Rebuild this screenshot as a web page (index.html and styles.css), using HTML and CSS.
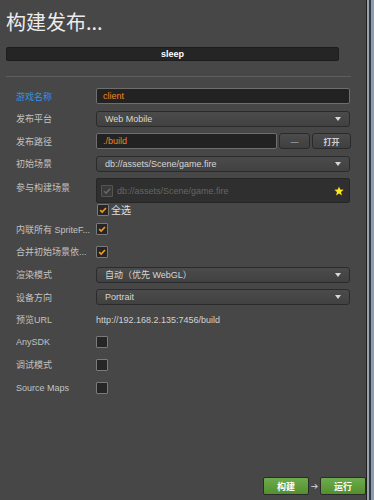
FILE: index.html
```html
<!DOCTYPE html>
<html lang="zh">

<head>
    <meta charset="UTF-8">
    <meta name="viewport" content="width=device-width, initial-scale=1.0">
    <title>构建发布</title>
    <link rel="stylesheet" href="styles.css">
</head>

<body>
    <div class="panel">
        <h1 class="title">构建发布...</h1>

        <div class="project-bar">sleep</div>

        <div class="divider"></div>

        <div class="form">
            <div class="row">
                <label class="label label-active">游戏名称</label>
                <input class="field" type="text" value="client">
            </div>

            <div class="row">
                <label class="label">发布平台</label>
                <div class="select">Web Mobile<span class="caret"></span></div>
            </div>

            <div class="row">
                <label class="label">发布路径</label>
                <input class="field field-path" type="text" value="./build">
                <button class="btn btn-dots">—</button>
                <button class="btn btn-open">打开</button>
            </div>

            <div class="row">
                <label class="label">初始场景</label>
                <div class="select">db://assets/Scene/game.fire<span class="caret"></span></div>
            </div>

            <div class="row row-scenes">
                <label class="label">参与构建场景</label>
                <div class="scenes">
                    <div class="scene-list">
                        <span class="check check-disabled">
                            <svg viewBox="0 0 12 12" width="12" height="12"><path d="M2.5 6.2 L5 8.6 L9.6 3.4" fill="none" stroke="#6a6a6a" stroke-width="1.8"/></svg>
                        </span>
                        <span class="scene-name">db://assets/Scene/game.fire</span>
                        <svg class="star" viewBox="0 0 10 10" width="10" height="10"><path d="M5 0.4 L6.2 3.6 L9.7 3.7 L7 5.9 L7.9 9.4 L5 7.4 L2.1 9.4 L3 5.9 L0.3 3.7 L3.8 3.6 Z" fill="#ffe81a"/></svg>
                    </div>
                    <div class="select-all">
                        <span class="check">
                            <svg viewBox="0 0 12 12" width="12" height="12"><path d="M2.6 6.2 L5 8.5 L9.6 3.6" fill="none" stroke="#f39a1d" stroke-width="2"/></svg>
                        </span>
                        全选
                    </div>
                </div>
            </div>

            <div class="row">
                <label class="label">内联所有 SpriteF...</label>
                <span class="check">
                    <svg viewBox="0 0 12 12" width="12" height="12"><path d="M2.6 6.2 L5 8.5 L9.6 3.6" fill="none" stroke="#f39a1d" stroke-width="2"/></svg>
                </span>
            </div>

            <div class="row">
                <label class="label">合并初始场景依...</label>
                <span class="check">
                    <svg viewBox="0 0 12 12" width="12" height="12"><path d="M2.6 6.2 L5 8.5 L9.6 3.6" fill="none" stroke="#f39a1d" stroke-width="2"/></svg>
                </span>
            </div>

            <div class="row">
                <label class="label">渲染模式</label>
                <div class="select">自动（优先 WebGL）<span class="caret"></span></div>
            </div>

            <div class="row">
                <label class="label">设备方向</label>
                <div class="select">Portrait<span class="caret"></span></div>
            </div>

            <div class="row">
                <label class="label">预览URL</label>
                <span class="url">http://192.168.2.135:7456/build</span>
            </div>

            <div class="row">
                <label class="label">AnySDK</label>
                <span class="check"></span>
            </div>

            <div class="row">
                <label class="label">调试模式</label>
                <span class="check"></span>
            </div>

            <div class="row">
                <label class="label">Source Maps</label>
                <span class="check"></span>
            </div>
        </div>

        <div class="footer">
            <button class="btn-green">构建</button>
            <span class="arrow">➔</span>
            <button class="btn-green">运行</button>
        </div>
    </div>

    <div class="scrollbar"></div>
</body>

</html>
```

FILE: styles.css
```css
body {
    font-family: "Liberation Sans", "Noto Sans CJK SC", sans-serif;
    margin: 0;
    padding: 0;
    background-color: #474747;
    color: #c4c4c4;
    width: 374px;
    height: 500px;
    display: flex;
    overflow: hidden;
}

.panel {
    width: 366px;
    height: 500px;
    display: flex;
    flex-direction: column;
}

.title {
    font-family: "Noto Sans CJK SC", sans-serif;
    font-size: 20px;
    font-weight: normal;
    line-height: 20px;
    color: #ececec;
    margin: 12px 0 0 6px;
}

.project-bar {
    margin: 15px 0 0 6px;
    width: 331px;
    height: 12px;
    line-height: 12px;
    background-color: #252525;
    border: 1px solid #1d1d1d;
    border-radius: 2px;
    color: #fff;
    font-size: 9px;
    font-weight: bold;
    text-align: center;
}

.divider {
    margin: 15px 0 0 6px;
    width: 345px;
    height: 1px;
    background-color: #5e5e5e;
}

.form {
    padding: 11px 0 0 16px;
    display: flex;
    flex-direction: column;
}

.row {
    display: flex;
    align-items: center;
    height: 16px;
    margin-bottom: 6.6px;
    font-size: 9px;
}

.label {
    width: 80px;
    flex-shrink: 0;
    white-space: nowrap;
    color: #c2c2c2;
}

.label-active {
    color: #2b95e6;
}

.field {
    box-sizing: border-box;
    width: 254px;
    height: 16px;
    padding: 0 6px;
    background-color: #222;
    border: 1px solid #6e6e6e;
    border-radius: 2px;
    color: #f5821f;
    font-family: inherit;
    font-size: 9px;
    outline: none;
}

.field-path {
    width: 181px;
}

.btn {
    box-sizing: border-box;
    height: 16px;
    margin-left: 2px;
    padding: 0;
    background: linear-gradient(#4c4c4c, #3f3f3f);
    border: 1px solid #2a2a2a;
    border-radius: 3px;
    color: #cfcfcf;
    font-family: inherit;
    font-size: 8px;
    font-weight: bold;
}

.btn-dots {
    width: 31px;
    color: #9a9a9a;
}

.btn-open {
    width: 39px;
}

.select {
    box-sizing: border-box;
    position: relative;
    width: 254px;
    height: 16px;
    line-height: 14px;
    padding: 0 8px;
    background: linear-gradient(#4b4b4b, #414141);
    border: 1px solid #2b2b2b;
    border-radius: 3px;
    color: #d6d6d6;
}

.caret {
    position: absolute;
    right: 8px;
    top: 5px;
    border-left: 3px solid transparent;
    border-right: 3px solid transparent;
    border-top: 4px solid #d8d8d8;
}

.row-scenes {
    height: auto;
    align-items: flex-start;
    margin-bottom: 5px;
}

.row-scenes .label {
    margin-top: 3px;
}

.scenes {
    display: flex;
    flex-direction: column;
}

.scene-list {
    box-sizing: border-box;
    width: 254px;
    height: 25px;
    padding: 0 4px 0 4px;
    display: flex;
    align-items: center;
    background-color: #2f2f2f;
    border: 1px solid #262626;
    border-radius: 2px;
}

.scene-name {
    flex: 1;
    margin-left: 4px;
    color: #666;
}

.star {
    margin-right: 1px;
}

.select-all {
    height: 13px;
    display: flex;
    align-items: center;
    margin-left: 1px;
    color: #e0e0e0;
    font-size: 10px;
}

.select-all .check {
    margin-right: 2px;
}

.check {
    box-sizing: border-box;
    width: 12px;
    height: 12px;
    display: flex;
    align-items: center;
    justify-content: center;
    background-color: #262626;
    border: 1px solid #7a7a7a;
    border-radius: 1px;
}

.check svg {
    width: 10px;
    height: 10px;
}

.check-disabled {
    border-color: #555;
    background-color: #3a3a3a;
}

.url {
    color: #d2d2d2;
}

.footer {
    margin-top: auto;
    margin-bottom: 5px;
    display: flex;
    align-items: center;
    justify-content: flex-end;
}

.btn-green {
    box-sizing: border-box;
    width: 46px;
    height: 18px;
    padding: 0;
    background: linear-gradient(#6dab4c, #52902f);
    border: 1px solid #2b2b2b;
    border-radius: 2px;
    color: #fff;
    font-family: "Noto Sans CJK SC", sans-serif;
    font-size: 9px;
    font-weight: bold;
}

.arrow {
    width: 11px;
    text-align: center;
    color: #c4c4c4;
    font-family: "DejaVu Sans", sans-serif;
    font-size: 9px;
}

.scrollbar {
    width: 8px;
    height: 500px;
    background: linear-gradient(to right, #222 0, #222 1px, #9aa3ab 1px, #9aa3ab 3px, #2d3a48 3px, #2d3a48 5px, #8f9cab 5px);
}
```
